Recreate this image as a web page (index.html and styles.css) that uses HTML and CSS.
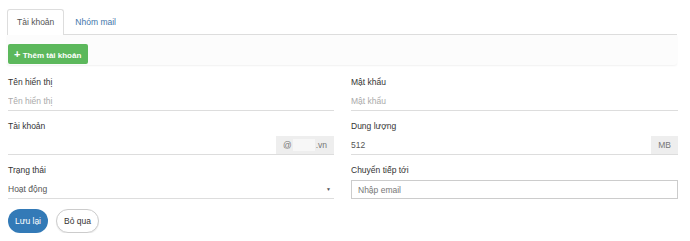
FILE: index.html
```html
<!doctype html>
<html lang="vi">
<head>
    <meta charset="UTF-8">
    <title>Tài khoản</title>
    <link rel="stylesheet" href="styles.css">
</head>
<body>
<div class="box">
    <ul class="tabs">
        <li class="tab active">Tài khoản</li>
        <li class="tab">Nhóm mail</li>
    </ul>
    <div class="toolbar">
        <a href="#" class="btn-add"><span class="plus">+</span> Thêm tài khoản</a>
    </div>
    <form class="form">
        <div class="group">
            <label>Tên hiển thị</label>
            <div class="line"><input type="text" placeholder="Tên hiển thị"></div>
        </div>
        <div class="group">
            <label>Mật khẩu</label>
            <div class="line"><input type="password" placeholder="Mật khẩu"></div>
        </div>
        <div class="group">
            <label>Tài khoản</label>
            <div class="line">
                <input type="text">
                <span class="addon domain">@<span class="hidden-name"></span>.vn</span>
            </div>
        </div>
        <div class="group">
            <label>Dung lượng</label>
            <div class="line">
                <input type="text" value="512">
                <span class="addon">MB</span>
            </div>
        </div>
        <div class="group">
            <label>Trạng thái</label>
            <div class="line select">
                <span class="value">Hoạt động</span>
                <span class="caret">▼</span>
            </div>
        </div>
        <div class="group">
            <label>Chuyển tiếp tới</label>
            <div class="boxed"><input type="text" placeholder="Nhập email"></div>
        </div>
        <div class="actions">
            <a href="#" class="btn-save">Lưu lại</a>
            <a href="#" class="btn-cancel">Bỏ qua</a>
        </div>
    </form>
</div>
</body>
</html>
```

FILE: styles.css
```css
body {
    margin: 0;
    font-family: "Liberation Sans", Arial, sans-serif;
    font-size: 8.5px;
    color: #333;
    background: #fff;
}

.box {
    width: 670px;
    margin: 0 0 0 7px;
}

.tabs {
    display: flex;
    list-style: none;
    margin: 0;
    padding: 9px 0 0 0;
    border-bottom: 1px solid #ddd;
}

.tab {
    height: 24px;
    line-height: 24px;
    padding: 0 9px;
    margin-right: 1px;
    color: #3f76aa;
    border: 1px solid transparent;
    border-bottom: none;
    border-radius: 3px 3px 0 0;
}

.tab.active {
    color: #555;
    border-color: #ddd;
    background: #fff;
    margin-bottom: -1px;
    height: 25px;
}

.toolbar {
    height: 30px;
    padding: 9px 0 0 1px;
    box-sizing: border-box;
    background: #fcfcfc;
    border-radius: 0 0 3px 3px;
    box-shadow: 0 1px 2px rgba(0, 0, 0, 0.06);
}

.btn-add {
    display: inline-block;
    height: 20px;
    line-height: 20px;
    padding: 0 7px 0 6px;
    border-radius: 2px;
    background: #5cb85c;
    color: #fff;
    text-decoration: none;
    font-weight: bold;
    font-size: 8px;
}

.plus {
    font-size: 11px;
    font-weight: bold;
}

.form {
    display: grid;
    grid-template-columns: 326px 327px;
    column-gap: 17px;
    padding: 11px 0 0 1px;
}

.group {
    margin-bottom: 9px;
}

label {
    display: block;
    height: 13px;
    line-height: 13px;
    margin-bottom: 3px;
    color: #333;
}

.line {
    display: flex;
    height: 19px;
    box-sizing: border-box;
    border-bottom: 1px solid #ddd;
}

.line input {
    flex: 1;
    min-width: 0;
    border: none;
    outline: none;
    padding: 0;
    font: inherit;
    color: #555;
    background: transparent;
}

input::placeholder {
    color: #aaa;
}

.addon {
    display: flex;
    align-items: center;
    background: #eee;
    color: #777;
    padding: 0 7px;
}

.domain {
    width: 44px;
    justify-content: space-between;
}

.hidden-name {
    display: inline-block;
    width: 22px;
    height: 12px;
    background: #f7f7f7;
}

.select {
    align-items: center;
    justify-content: space-between;
    color: #555;
}

.caret {
    font-size: 5px;
    padding-right: 3px;
    color: #555;
}

.boxed {
    height: 19px;
    margin-top: 3px;
    border: 1px solid #ccc;
    box-sizing: border-box;
    display: flex;
}

.boxed input {
    flex: 1;
    border: none;
    outline: none;
    padding: 0 6px;
    font: inherit;
    background: transparent;
}

.boxed input::placeholder {
    color: #777;
}

.actions {
    grid-column: 1 / 3;
    display: flex;
    gap: 8px;
    margin-top: 1px;
}

.actions a {
    display: inline-block;
    height: 24px;
    line-height: 24px;
    padding: 0 7px;
    border-radius: 12px;
    text-decoration: none;
    box-sizing: border-box;
}

.btn-save {
    background: #337ab7;
    color: #fff;
}

.btn-cancel {
    background: #fff;
    color: #333;
    border: 1px solid #ccc;
    line-height: 22px !important;
    box-shadow: 0 1px 1px rgba(0, 0, 0, 0.08);
}
```
